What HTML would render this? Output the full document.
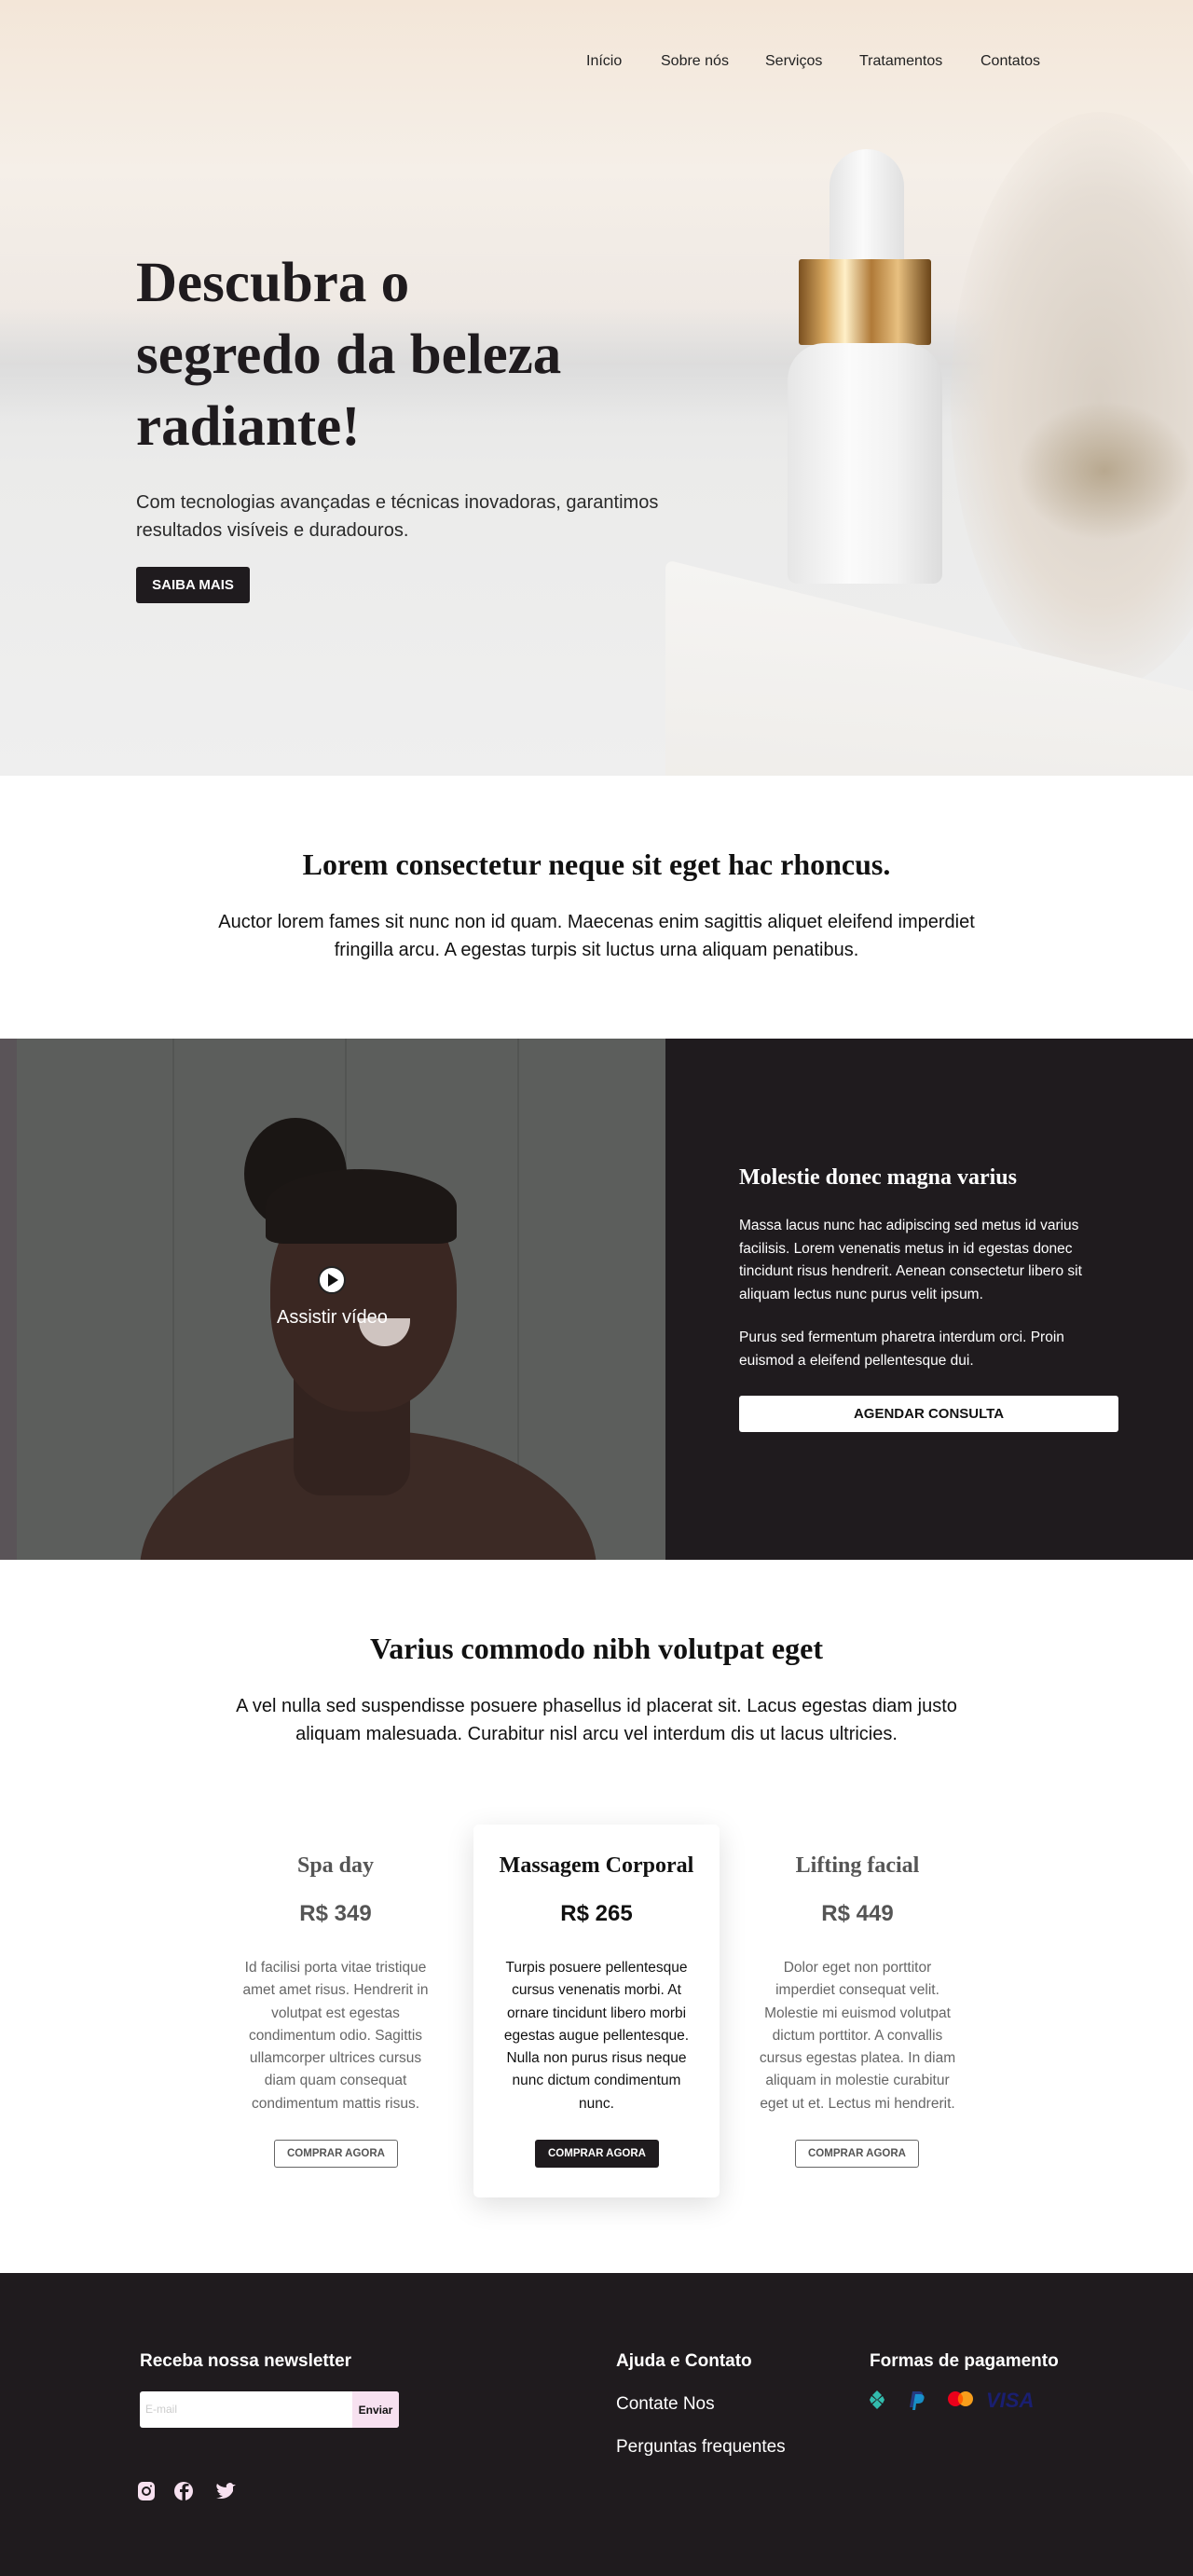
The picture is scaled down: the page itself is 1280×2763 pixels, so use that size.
<!DOCTYPE html>
<html><head><meta charset="utf-8">
<style>
*{margin:0;padding:0;box-sizing:border-box}
body{width:1280px;height:2763px;font-family:"Liberation Sans",sans-serif;color:#111;background:#fff;position:relative;overflow:hidden}
.serif{font-family:"Liberation Serif",serif;font-weight:bold}
.abs{position:absolute}
#hero{position:absolute;left:0;top:0;width:1280px;height:832px;overflow:hidden;
background:linear-gradient(180deg,#f3e6d8 0%,#f5efe8 22%,#efe9e4 40%,#e6e6e6 48%,#ebebea 60%,#efefef 100%)}
nav a{position:absolute;top:57px;font-size:16px;color:#222;text-decoration:none}
.btn{position:absolute;display:flex;align-items:center;justify-content:center;font-weight:bold;border-radius:3px}
.desc{font-size:15.5px;line-height:24.3px;margin:32px auto 0;width:212px}
</style></head><body>

<div id="hero">
  <div class="abs" style="left:0;top:330px;width:1280px;height:120px;background:linear-gradient(180deg,rgba(220,218,216,0),rgba(214,214,214,.6),rgba(230,230,230,0))"></div>
  <div class="abs" style="left:1020px;top:120px;width:320px;height:620px;border-radius:50%;background:radial-gradient(ellipse at center,#d8cfc4 0%,#e5ddd4 50%,rgba(240,235,230,0) 75%)"></div>
  <div class="abs" style="left:1090px;top:430px;width:190px;height:150px;border-radius:40%;background:radial-gradient(ellipse,#b8a88f 0%,rgba(200,190,175,0) 70%)"></div>
  <div class="abs" style="left:714px;top:600px;width:700px;height:300px;background:linear-gradient(170deg,#f5f4f2,#ebe8e4);transform:skewY(14deg);transform-origin:left top;border-radius:10px;border-bottom:3px solid #333"></div>
  <div class="abs" style="left:890px;top:160px;width:80px;height:125px;background:linear-gradient(90deg,#e4e4e4,#fafafa 45%,#e0e0e0);border-radius:40px 40px 4px 4px"></div>
  <div class="abs" style="left:857px;top:278px;width:142px;height:92px;background:linear-gradient(90deg,#7a5020,#d8a860 20%,#fff0c8 35%,#b07a38 55%,#e8c080 75%,#6a4418);border-radius:3px"></div>
  <div class="abs" style="left:845px;top:368px;width:166px;height:258px;background:linear-gradient(90deg,#e6e6e6,#fbfbfb 40%,#f2f2f2 70%,#dcdcdc);border-radius:40px 40px 10px 10px"></div>

  <nav>
    <a style="left:629px">Início</a><a style="left:709px">Sobre nós</a><a style="left:821px">Serviços</a><a style="left:922px">Tratamentos</a><a style="left:1052px">Contatos</a>
  </nav>
  <h1 class="serif abs" style="left:146px;top:265px;font-size:61px;line-height:77px;color:#1f1b1e;width:600px">Descubra o<br>segredo da beleza<br>radiante!</h1>
  <p class="abs" style="left:146px;top:524px;font-size:20px;line-height:30px;color:#2a2a2a;width:600px">Com tecnologias avançadas e técnicas inovadoras, garantimos resultados visíveis e duradouros.</p>
  <div class="btn" style="left:146px;top:608px;width:122px;height:39px;background:#1f1b1e;color:#fff;font-size:15px">SAIBA MAIS</div>
</div>

<h2 class="serif abs" style="left:0;width:1280px;text-align:center;top:909px;font-size:32px;color:#111">Lorem consectetur neque sit eget hac rhoncus.</h2>
<p class="abs" style="left:220px;width:840px;text-align:center;top:974px;font-size:20px;line-height:30px;color:#111">Auctor lorem fames sit nunc non id quam. Maecenas enim sagittis aliquet eleifend imperdiet fringilla arcu. A egestas turpis sit luctus urna aliquam penatibus.</p>

<div class="abs" style="left:0;top:1114px;width:714px;height:559px;background:#5c5e5c;overflow:hidden">
  <div class="abs" style="left:0;top:0;width:18px;height:559px;background:#5a5458"></div>
  <div class="abs" style="left:185px;top:0;width:2px;height:559px;background:#535553"></div>
  <div class="abs" style="left:370px;top:0;width:2px;height:559px;background:#535553"></div>
  <div class="abs" style="left:555px;top:0;width:2px;height:559px;background:#535553"></div>
  <div class="abs" style="left:150px;top:420px;width:490px;height:300px;border-radius:50% 50% 0 0;background:#3c2a25"></div>
  <div class="abs" style="left:315px;top:320px;width:125px;height:170px;background:#33231f;border-radius:30px"></div>
  <div class="abs" style="left:262px;top:85px;width:110px;height:120px;border-radius:50%;background:#1a1614"></div>
  <div class="abs" style="left:290px;top:150px;width:200px;height:250px;border-radius:48% 48% 45% 45%;background:#3a2722"></div>
  <div class="abs" style="left:285px;top:140px;width:205px;height:80px;border-radius:50% 50% 10% 10%;background:#1c1715"></div>
  <div class="abs" style="left:385px;top:300px;width:55px;height:30px;border-radius:0 0 30px 30px;background:#cfc4c0"></div>
</div>
<svg class="abs" style="left:340px;top:1357px" width="32" height="32" viewBox="0 0 32 32"><circle cx="16" cy="16" r="14" fill="#fff" stroke="#222" stroke-width="2"/><path d="M12 9 L23 16 L12 23Z" fill="#111"/></svg>
<div class="abs" style="left:297px;top:1402px;font-size:20px;color:#fff">Assistir vídeo</div>

<div class="abs" style="left:714px;top:1114px;width:566px;height:559px;background:#1f1b1e"></div>
<h3 class="serif abs" style="left:793px;top:1250px;font-size:24px;color:#fff">Molestie donec magna varius</h3>
<p class="abs" style="left:793px;top:1303px;width:400px;font-size:15.5px;line-height:24.5px;color:#fff">Massa lacus nunc hac adipiscing sed metus id varius facilisis. Lorem venenatis metus in id egestas donec tincidunt risus hendrerit. Aenean consectetur libero sit aliquam lectus nunc purus velit ipsum.</p>
<p class="abs" style="left:793px;top:1423px;width:400px;font-size:15.5px;line-height:24.5px;color:#fff">Purus sed fermentum pharetra interdum orci. Proin euismod a eleifend pellentesque dui.</p>
<div class="btn" style="left:793px;top:1497px;width:407px;height:39px;background:#fff;color:#111;font-size:15px">AGENDAR CONSULTA</div>

<h2 class="serif abs" style="left:0;width:1280px;text-align:center;top:1750px;font-size:32px;color:#111">Varius commodo nibh volutpat eget</h2>
<p class="abs" style="left:240px;width:800px;text-align:center;top:1815px;font-size:20px;line-height:30px;color:#111">A vel nulla sed suspendisse posuere phasellus id placerat sit. Lacus egestas diam justo aliquam malesuada. Curabitur nisl arcu vel interdum dis ut lacus ultricies.</p>

<div class="abs" style="left:508px;top:1957px;width:264px;height:400px;background:#fff;border-radius:6px;box-shadow:0 8px 30px rgba(0,0,0,.13)"></div>

<div class="abs" style="left:240px;top:1988px;width:240px;text-align:center;color:#555">
  <div class="serif" style="font-size:24px">Spa day</div>
  <div style="font-size:24px;font-weight:bold;margin-top:24px">R$ 349</div>
  <div class="desc" style="color:#666">Id facilisi porta vitae tristique amet amet risus. Hendrerit in volutpat est egestas condimentum odio. Sagittis ullamcorper ultrices cursus diam quam consequat condimentum mattis risus.</div>
</div>
<div class="btn" style="left:294px;top:2295px;width:133px;height:30px;border:1px solid #666;color:#555;font-size:11.5px">COMPRAR AGORA</div>

<div class="abs" style="left:510px;top:1988px;width:260px;text-align:center;color:#111">
  <div class="serif" style="font-size:24px">Massagem Corporal</div>
  <div style="font-size:24px;font-weight:bold;margin-top:24px">R$ 265</div>
  <div class="desc">Turpis posuere pellentesque cursus venenatis morbi. At ornare tincidunt libero morbi egestas augue pellentesque. Nulla non purus risus neque nunc dictum condimentum nunc.</div>
</div>
<div class="btn" style="left:574px;top:2295px;width:133px;height:30px;background:#1f1b1e;color:#fff;font-size:11.5px">COMPRAR AGORA</div>

<div class="abs" style="left:800px;top:1988px;width:240px;text-align:center;color:#555">
  <div class="serif" style="font-size:24px">Lifting facial</div>
  <div style="font-size:24px;font-weight:bold;margin-top:24px">R$ 449</div>
  <div class="desc" style="color:#666;width:218px">Dolor eget non porttitor imperdiet consequat velit. Molestie mi euismod volutpat dictum porttitor. A convallis cursus egestas platea. In diam aliquam in molestie curabitur eget ut et. Lectus mi hendrerit.</div>
</div>
<div class="btn" style="left:853px;top:2295px;width:133px;height:30px;border:1px solid #666;color:#555;font-size:11.5px">COMPRAR AGORA</div>

<div class="abs" style="left:0;top:2438px;width:1280px;height:325px;background:#1f1b1e"></div>
<div class="abs" style="left:150px;top:2522px;font-size:19px;font-weight:bold;color:#fff">Receba nossa newsletter</div>
<div class="abs" style="left:150px;top:2565px;width:278px;height:39px;background:#fff;border-radius:3px;overflow:hidden">
  <span class="abs" style="left:6px;top:12px;font-size:12px;color:#ccc">E-mail</span>
  <div class="abs" style="left:228px;top:0;width:50px;height:39px;background:#f7e1f0;font-size:12px;font-weight:bold;display:flex;align-items:center;justify-content:center;color:#111">Enviar</div>
</div>
<svg class="abs" style="left:147px;top:2661px" width="110" height="22" viewBox="0 0 110 22">
  <rect x="1" y="1" width="18" height="20" rx="5" fill="#f7e1f0"/><circle cx="10" cy="11" r="4" fill="none" stroke="#1f1b1e" stroke-width="2"/><circle cx="15" cy="5.5" r="1" fill="#1f1b1e"/>
  <circle cx="50" cy="11" r="10" fill="#f7e1f0"/><path d="M52 21 V12 H55 L55.5 9 H52 V7 Q52 5.5 53.5 5.5 H55.5 V3 H53 Q48.5 3 48.5 7 V9 H46 V12 H48.5 V21Z" fill="#1f1b1e"/>
  <path d="M90 19 Q99 19 103 11 L103 6 L106 4 L103 4 Q101 1 98 2.5 Q95 4 96 7 Q90 7 86 3 Q84 7 88 10 L86 10 Q87 13 90 14 L88 14 Q89 16 92 16 Q89 18.5 85 18 Q87 19 90 19Z" fill="#f7e1f0"/>
</svg>
<div class="abs" style="left:661px;top:2522px;font-size:19px;font-weight:bold;color:#fff">Ajuda e Contato</div>
<div class="abs" style="left:661px;top:2568px;font-size:19px;color:#fff">Contate Nos</div>
<div class="abs" style="left:661px;top:2614px;font-size:19px;color:#fff">Perguntas frequentes</div>
<div class="abs" style="left:933px;top:2522px;font-size:19px;font-weight:bold;color:#fff">Formas de pagamento</div>
<svg class="abs" style="left:933px;top:2562px" width="190" height="26" viewBox="0 0 190 26">
  <g fill="#32bcad"><path d="M8 2 L13 7 L8 12 L3 7Z"/><path d="M8 12 L13 17 L8 22 L3 17Z"/><path d="M2 8 L7 12 L2 16 L0 12Z"/><path d="M14 8 L16 12 L14 16 L9 12Z"/></g>
  <path d="M46 3 H53 Q58 3 57 8 Q56 13 50 13 H48 L46.5 20 H43Z" fill="#253b80"/><path d="M49 6 H55 Q60 7 58 12 Q57 16 52 16 H50 L49 23 H46Z" fill="#179bd7" opacity=".9"/>
  <circle cx="92" cy="11" r="8" fill="#eb001b"/><circle cx="103" cy="11" r="8" fill="#f79e1b"/><path d="M97.5 5 A8 8 0 0 1 97.5 17 A8 8 0 0 1 97.5 5Z" fill="#ff5f00"/>
  <text x="125" y="20" font-family="Liberation Sans" font-weight="bold" font-style="italic" font-size="22" fill="#1a1f71">VISA</text>
</svg>
</body></html>
